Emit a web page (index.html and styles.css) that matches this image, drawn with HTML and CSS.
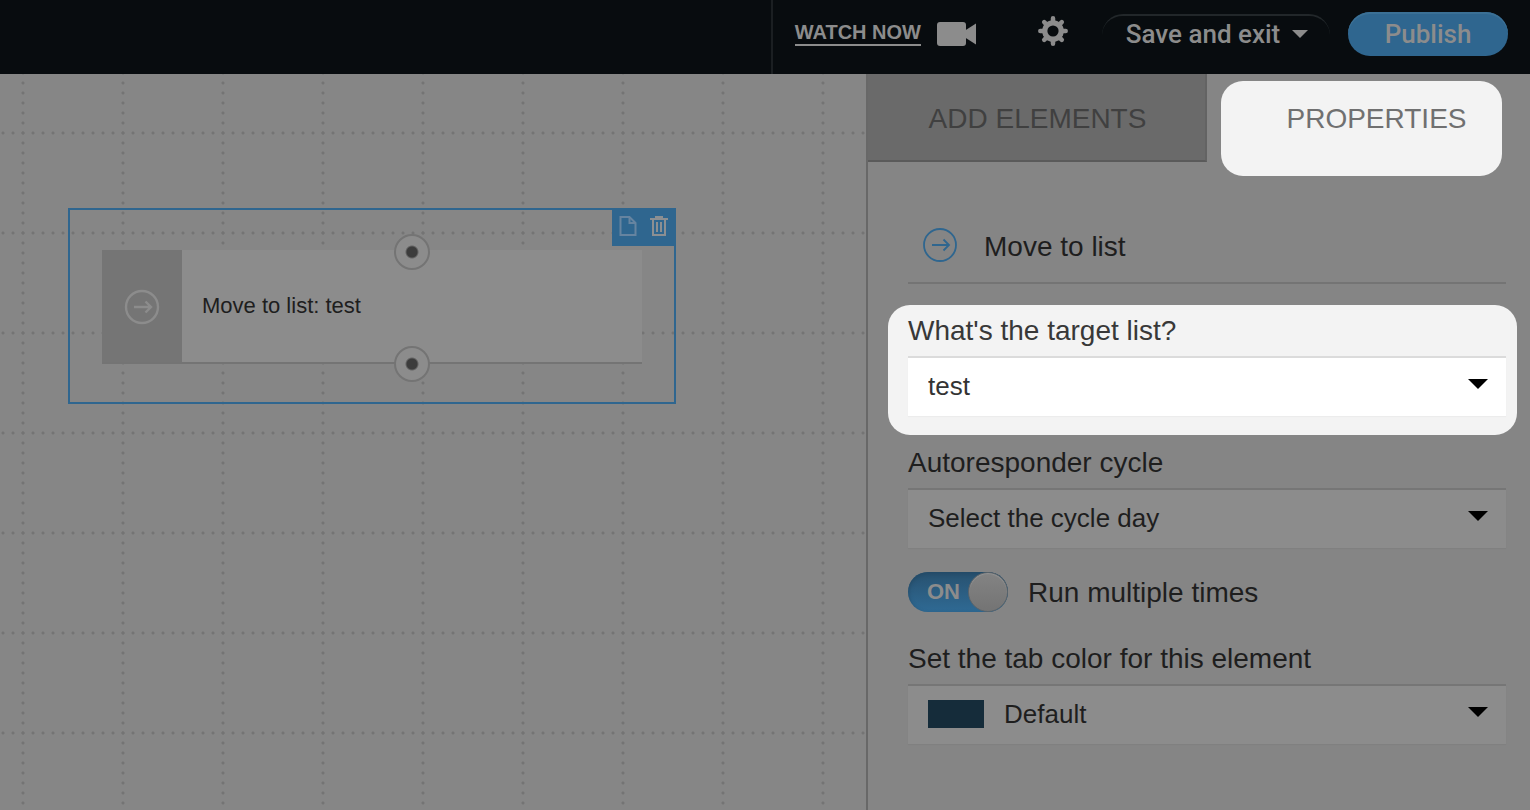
FILE: index.html
```
<!DOCTYPE html>
<html lang="en">
  <head>
    <meta charset="UTF-8" />
    <meta name="viewport" content="width=device-width, initial-scale=1.0" />
    <title>Workflow editor</title>
    <link rel="stylesheet" href="styles.css">
  </head>
  <body>
    <header class="topbar">
      <div class="topbar-actions">
        <a class="watch" href="#">
          <span class="watch-text">WATCH NOW</span>
          <svg width="40" height="24" viewBox="0 0 40 24" fill="currentColor" aria-hidden="true">
            <rect x="0" y="0" width="29" height="24" rx="3" />
            <path d="M28 8.500L39 1.500V22.500L28 15.500Z" />
          </svg>
        </a>
        <button class="icon-btn" type="button" aria-label="Settings">
          <svg width="30" height="30" viewBox="-15 -15 30 30" aria-hidden="true">
            <g stroke="currentColor" stroke-width="4.500" stroke-linecap="round">
              <path d="M0 -12.700V12.700M-12.700 0H12.700M-8.800 -8.800L8.800 8.800M-8.800 8.800L8.800 -8.800" />
            </g>
            <circle r="10.800" fill="currentColor" />
            <circle r="5.600" fill="#080c0f" />
          </svg>
        </button>
        <button class="btn btn-save" type="button">Save and exit <span class="caret"></span></button>
        <button class="btn btn-publish" type="button">Publish</button>
      </div>
    </header>

    <main class="editor">
      <section class="canvas">
        <div class="node">
          <div class="node-tools">
            <button type="button" aria-label="Copy">
              <svg width="18" height="20" viewBox="0 0 18 20" fill="none" stroke="#6684a0" stroke-width="2" aria-hidden="true">
                <path d="M1.500 1H10.500L16.500 7V19H1.500Z" />
                <path d="M10.500 1V7H16.500" />
              </svg>
            </button>
            <button type="button" aria-label="Delete">
              <svg width="18" height="20" viewBox="0 0 18 20" fill="none" stroke="#8c8f92" stroke-width="2" aria-hidden="true">
                <path d="M0 3H18M6 2V1H12V2M3 3V19H15V3M7 6V16M11 6V16" />
              </svg>
            </button>
          </div>
          <div class="node-card">
            <div class="node-tab">
              <svg width="36" height="36" viewBox="0 0 36 36" fill="none" stroke="#8c8c8c" stroke-width="2.400" aria-hidden="true">
                <circle cx="18" cy="18" r="16" />
                <path d="M10 18H27M21.500 12.500L27 18L21.500 23.500" />
              </svg>
            </div>
            <p class="node-title">Move to list: test</p>
            <span class="port port-in"></span>
            <span class="port port-out"></span>
          </div>
        </div>
      </section>

      <aside class="panel">
        <div class="tabs">
          <button class="tab" type="button">ADD ELEMENTS</button>
          <button class="tab tab-active" type="button"><span>PROPERTIES</span></button>
        </div>

        <form class="props">
          <div class="props-head">
            <svg width="36" height="36" viewBox="0 0 36 36" fill="none" stroke="#2f668f" stroke-width="1.800" aria-hidden="true">
              <circle cx="18" cy="18" r="16" />
              <path d="M10 18H27M21.500 12.500L27 18L21.500 23.500" />
            </svg>
            <h2>Move to list</h2>
          </div>

          <div class="field field-focus">
            <label for="list">What's the target list?</label>
            <div class="select">
              <select id="list"><option>test</option></select>
            </div>
          </div>

          <div class="field">
            <label for="cycle">Autoresponder cycle</label>
            <div class="select">
              <select id="cycle"><option>Select the cycle day</option></select>
            </div>
          </div>

          <div class="toggle-row">
            <div class="toggle">
              <input type="checkbox" id="multiple" checked />
              <span class="toggle-text">ON</span>
              <span class="toggle-knob"></span>
            </div>
            <label for="multiple">Run multiple times</label>
          </div>

          <div class="field">
            <label for="color">Set the tab color for this element</label>
            <div class="select select-color">
              <span class="swatch"></span>
              <select id="color"><option>Default</option></select>
            </div>
          </div>
        </form>
      </aside>
    </main>
  </body>
</html>
```
FILE: styles.css
```
* {
  margin: 0;
  padding: 0;
  box-sizing: border-box;
}
:root {
  --dark: #080c0f;
  --blue: #2f668f;
  --light: #8c8c8c;
  --text: #1e1e1e;
}
body {
  display: flex;
  flex-direction: column;
  min-height: 100vh;
  font-family: "Liberation Sans", Arial, sans-serif;
  color: var(--text);
  background: #868686;
}
button {
  border: none;
  background: none;
  font-family: inherit;
  color: inherit;
  cursor: pointer;
}
svg {
  display: block;
}

/* top bar */
.topbar {
  display: flex;
  justify-content: flex-end;
  height: 74px;
  background: var(--dark);
  color: var(--light);
}
.topbar-actions {
  display: flex;
  align-items: flex-start;
  padding: 12px 22px 0;
  border-left: 2px solid #1b1f22;
}
.watch {
  display: flex;
  gap: 16px;
  margin-top: 10px;
  color: inherit;
  text-decoration: none;
}
.watch-text {
  height: 24px;
  border-bottom: 2px solid var(--light);
  font-size: 20px;
  font-weight: bold;
  line-height: 20px;
}
.icon-btn {
  margin: 4px 34px 0 61px;
}
.btn {
  height: 44px;
  border-radius: 22px;
  font-family: Roboto, sans-serif;
  font-size: 26px;
  font-weight: 500;
  line-height: 44px;
}
.btn-save {
  position: relative;
  display: flex;
  align-items: center;
  justify-content: center;
  gap: 12px;
  width: 228px;
  margin-right: 18px;
  padding-left: 2px;
}
.btn-save::before {
  content: "";
  position: absolute;
  inset: 2px 0 0;
  border-top: 2px solid #22272a;
  border-radius: 22px;
}
.caret {
  border: 8px solid transparent;
  border-top-color: var(--light);
  border-bottom: none;
}
.btn-publish {
  width: 160px;
  background: var(--blue);
  box-shadow: inset 0 2px 0 #3b7095;
}

/* canvas */
.editor {
  display: flex;
  flex: 1;
}
.canvas {
  flex: 1;
  position: relative;
  background-color: #868686;
  background-image:
    radial-gradient(circle, #747474 1px, transparent 2px),
    radial-gradient(circle, #747474 1px, transparent 2px);
  background-size: 100px 10px, 10px 100px;
  background-position: -27px 4px, -2px 9px;
}
.node {
  position: absolute;
  left: 68px;
  top: 134px;
  width: 608px;
  padding: 40px 32px 38px;
  border: 2px solid var(--blue);
}
.node-tools {
  position: absolute;
  top: -2px;
  right: -2px;
  display: flex;
  align-items: center;
  justify-content: center;
  gap: 13px;
  width: 64px;
  height: 38px;
  padding: 0 2px 2px 0;
  background: var(--blue);
}
.node-card {
  position: relative;
  display: flex;
  height: 114px;
  border-bottom: 2px solid #747474;
  background: var(--light);
}
.node-tab {
  display: flex;
  align-items: center;
  justify-content: center;
  width: 80px;
  padding-top: 2px;
  background: #757575;
}
.node-title {
  padding-left: 20px;
  font-size: 22px;
  line-height: 112px;
}
.port {
  position: absolute;
  left: 292px;
  width: 36px;
  height: 36px;
  border: 2px solid #747474;
  border-radius: 50%;
  background: radial-gradient(circle, #3c3c3c 5px, var(--light) 7px);
}
.port-in {
  top: -16px;
}
.port-out {
  bottom: -20px;
}

/* side panel */
.panel {
  width: 664px;
  border-left: 2px solid #686868;
  background: #858585;
}
.tabs {
  display: flex;
}
.tab {
  width: 339px;
  height: 88px;
  padding: 3px 0 0 2px;
  border-right: 2px solid #636363;
  border-bottom: 2px solid #5a5a5a;
  background: #6a6a6a;
  color: #404040;
  font-size: 28px;
}
.tab-active {
  flex: 1;
  position: relative;
  padding: 2px 0 0 16px;
  border: none;
  background: none;
  color: #707070;
}
.tab-active::before {
  content: "";
  position: absolute;
  inset: 7px 28px -14px 14px;
  border-radius: 22px;
  background: #f3f3f3;
}
.tab-active span {
  position: relative;
}
.props {
  padding: 64px 24px 24px 40px;
}
.props-head {
  display: flex;
  align-items: flex-start;
  gap: 26px;
  height: 58px;
  margin-bottom: 30px;
  padding: 1px 14px 0;
  border-bottom: 2px solid #747474;
}
.props-head h2 {
  font-size: 28px;
  font-weight: normal;
  line-height: 40px;
}
.field {
  position: relative;
  margin-bottom: 30px;
}
.field label {
  display: block;
  position: relative;
  margin-bottom: 8px;
  font-size: 28px;
  line-height: 34px;
}
.select {
  position: relative;
}
.select::after {
  content: "";
  position: absolute;
  right: 18px;
  top: 23px;
  border: 10px solid transparent;
  border-top-color: #000;
  border-bottom: none;
  pointer-events: none;
}
.select select {
  display: block;
  width: 100%;
  height: 60px;
  padding: 0 20px 2px;
  appearance: none;
  border: none;
  border-top: 2px solid #767676;
  border-radius: 0;
  box-shadow: 0 1px 1px #808080;
  background: var(--light);
  color: var(--text);
  font-family: inherit;
  font-size: 26px;
}
.select-color select {
  padding-left: 96px;
}
.swatch {
  position: absolute;
  left: 20px;
  top: 16px;
  width: 56px;
  height: 28px;
  background: #152c3a;
}
/* highlighted field */
.field-focus::before {
  content: "";
  position: absolute;
  inset: -9px -11px -19px -20px;
  border-radius: 22px;
  background: #f3f3f3;
}
.field-focus label {
  color: #383838;
}
.field-focus select {
  border-top-color: #dbdbdb;
  box-shadow: 0 1px 1px #ececec;
  background: #fff;
  color: #333;
}

.toggle-row {
  display: flex;
  align-items: center;
  gap: 20px;
  margin: -6px 0 30px;
  font-size: 28px;
}
.toggle-row label {
  padding-top: 2px;
}
.toggle {
  position: relative;
  width: 100px;
  height: 40px;
}
.toggle input {
  display: block;
  width: 100px;
  height: 40px;
  appearance: none;
  border-radius: 20px;
  background: linear-gradient(#28516f, #2f6a94);
  box-shadow: inset 0 2px 4px #234a66;
}
.toggle-text {
  position: absolute;
  left: 19px;
  top: 0;
  color: var(--light);
  font-size: 22px;
  font-weight: bold;
  line-height: 40px;
  pointer-events: none;
}
.toggle-knob {
  position: absolute;
  right: 0;
  top: 0;
  width: 40px;
  height: 40px;
  border: 1px solid #5c646a;
  border-radius: 50%;
  background: linear-gradient(#838383, #747474);
  box-shadow: inset 0 1px 1px #949494;
  pointer-events: none;
}
```
